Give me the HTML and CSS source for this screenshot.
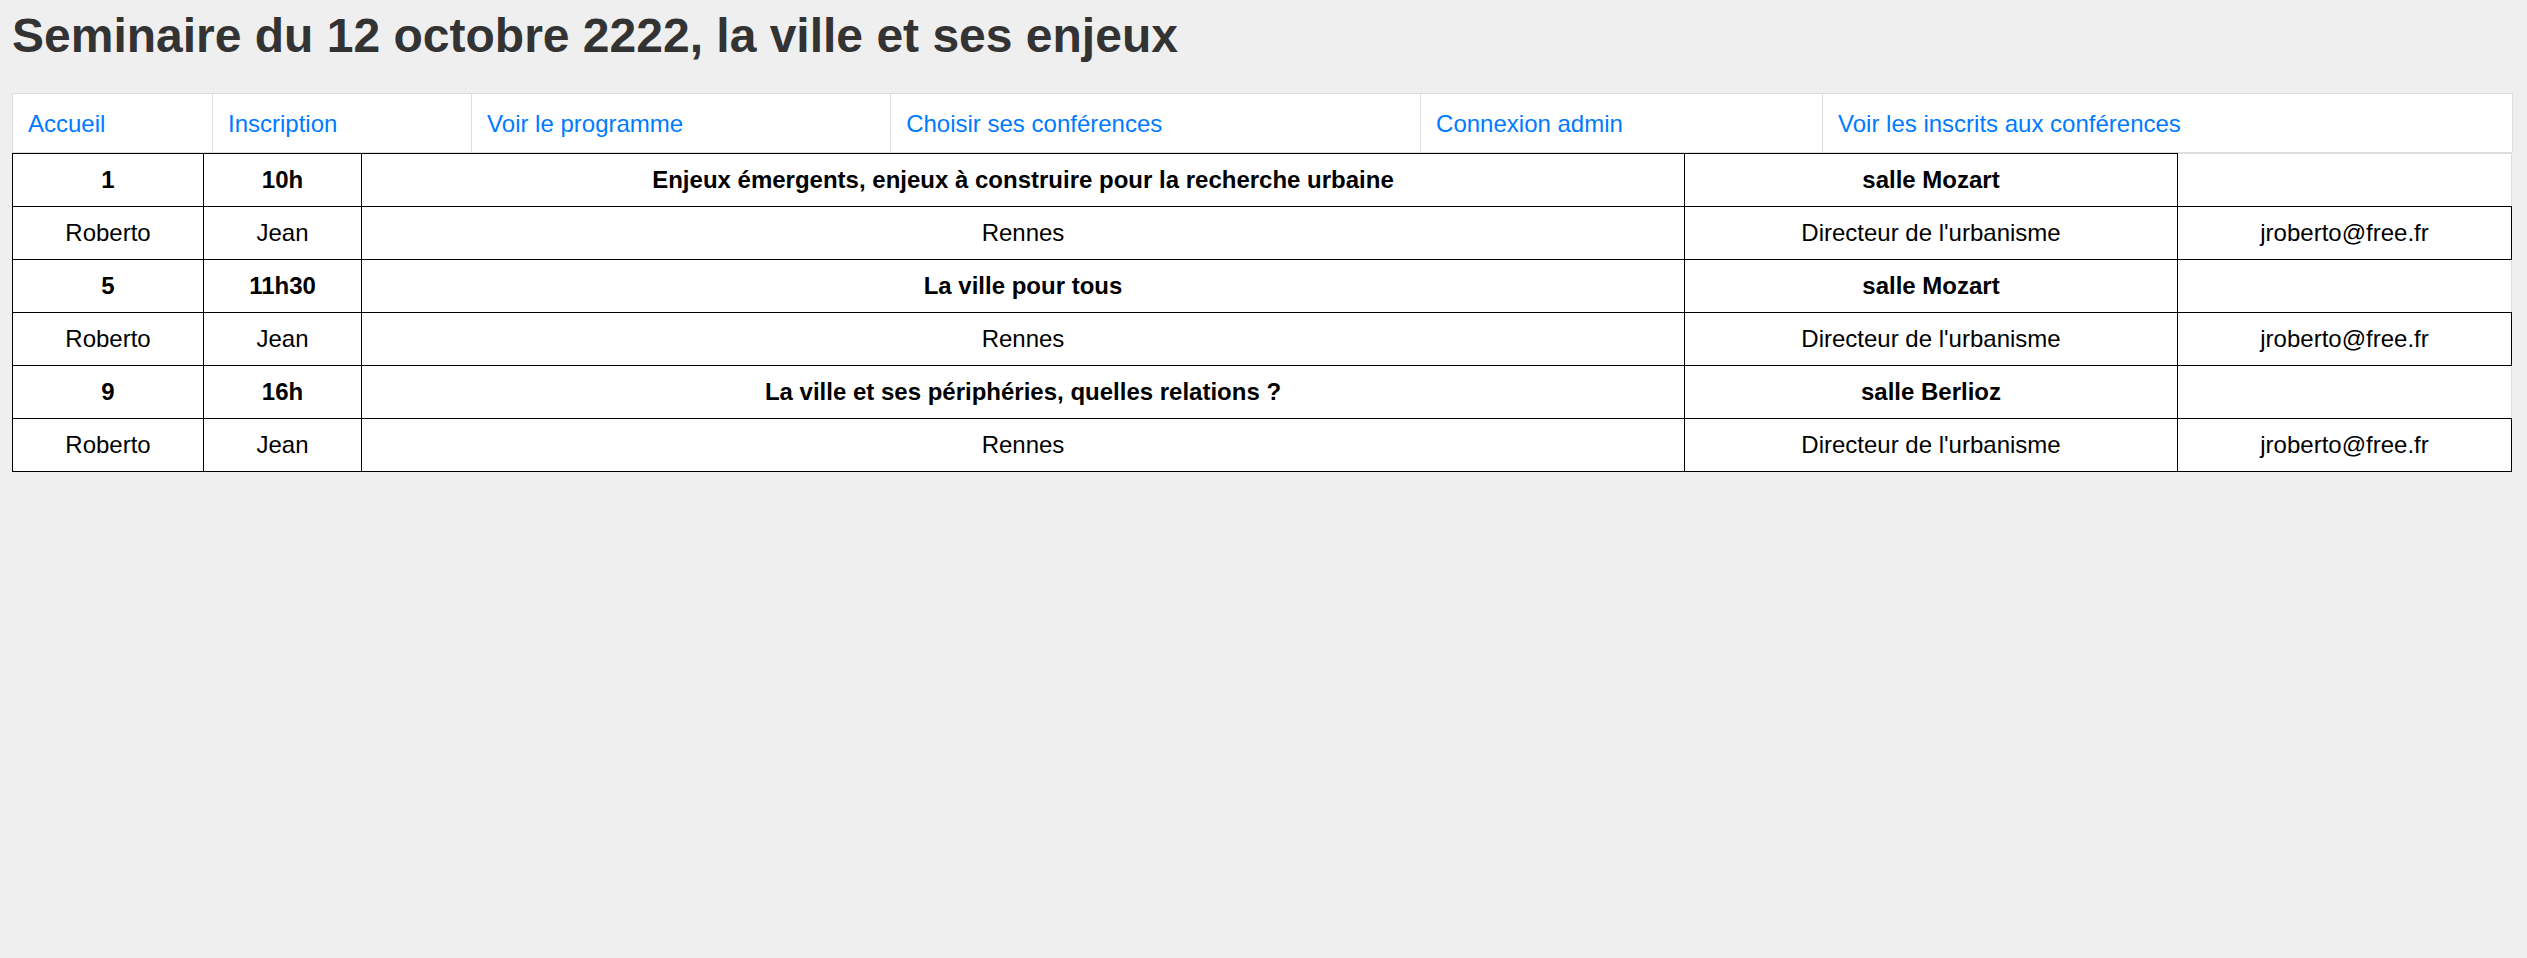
FILE: index.html
```html
<!DOCTYPE html>
<html lang="fr">
<head>
<meta charset="utf-8">
<title>Seminaire</title>
<link rel="stylesheet" href="styles.css">
</head>
<body>
<div class="page">
  <h1 class="title">Seminaire du 12 octobre 2222, la ville et ses enjeux</h1>
  <nav class="menu">
    <ul class="menu-list">
      <li class="menu-item"><a class="menu-link" href="#">Accueil</a></li>
      <li class="menu-item"><a class="menu-link" href="#">Inscription</a></li>
      <li class="menu-item"><a class="menu-link" href="#">Voir le programme</a></li>
      <li class="menu-item"><a class="menu-link" href="#">Choisir ses conférences</a></li>
      <li class="menu-item"><a class="menu-link" href="#">Connexion admin</a></li>
      <li class="menu-item"><a class="menu-link" href="#">Voir les inscrits aux conférences</a></li>
    </ul>
  </nav>
  <table class="grid">
    <colgroup>
      <col class="c1"><col class="c2"><col class="c3"><col class="c4"><col class="c5">
    </colgroup>
    <tbody>
      <tr class="conf"><td>1</td><td>10h</td><td>Enjeux émergents, enjeux à construire pour la recherche urbaine</td><td>salle Mozart</td></tr>
      <tr class="person"><td>Roberto</td><td>Jean</td><td>Rennes</td><td>Directeur de l'urbanisme</td><td>jroberto@free.fr</td></tr>
      <tr class="conf"><td>5</td><td>11h30</td><td>La ville pour tous</td><td>salle Mozart</td></tr>
      <tr class="person"><td>Roberto</td><td>Jean</td><td>Rennes</td><td>Directeur de l'urbanisme</td><td>jroberto@free.fr</td></tr>
      <tr class="conf"><td>9</td><td>16h</td><td>La ville et ses périphéries, quelles relations ?</td><td>salle Berlioz</td></tr>
      <tr class="person"><td>Roberto</td><td>Jean</td><td>Rennes</td><td>Directeur de l'urbanisme</td><td>jroberto@free.fr</td></tr>
    </tbody>
  </table>
</div>
</body>
</html>
```
FILE: styles.css
```css
html, body {
  margin: 0;
  padding: 0;
  background: #efefef;
  font-family: "Liberation Sans", Arial, sans-serif;
  font-size: 24px;
  color: #000;
}

.page {
  margin: 0 15px 0 12px;
}

.title {
  margin: 8px 0 30px 0;
  font-size: 48px;
  font-weight: bold;
  color: #333;
}

.menu-list {
  display: table;
  width: 100%;
  border-collapse: collapse;
  margin: 0;
  padding: 0;
  list-style: none;
  background: #fff;
  border: 1px solid #ddd;
}

.menu-item {
  display: table-cell;
  padding: 16px 15px 14px 15px;
  border-right: 1px solid #ddd;
  white-space: nowrap;
}

.menu-link {
  color: #007bff;
  text-decoration: none;
}

.grid {
  width: 100%;
  border-collapse: collapse;
  background: #fff;
  border: 1px solid #ddd;
}

.grid td {
  border: 1px solid #000;
  padding: 12px;
  text-align: center;
}

.conf td {
  font-weight: bold;
}

.c1 { width: 191px; }
.c2 { width: 158px; }
.c3 { width: 1323px; }
.c4 { width: 493px; }
.c5 { width: 334px; }
```
